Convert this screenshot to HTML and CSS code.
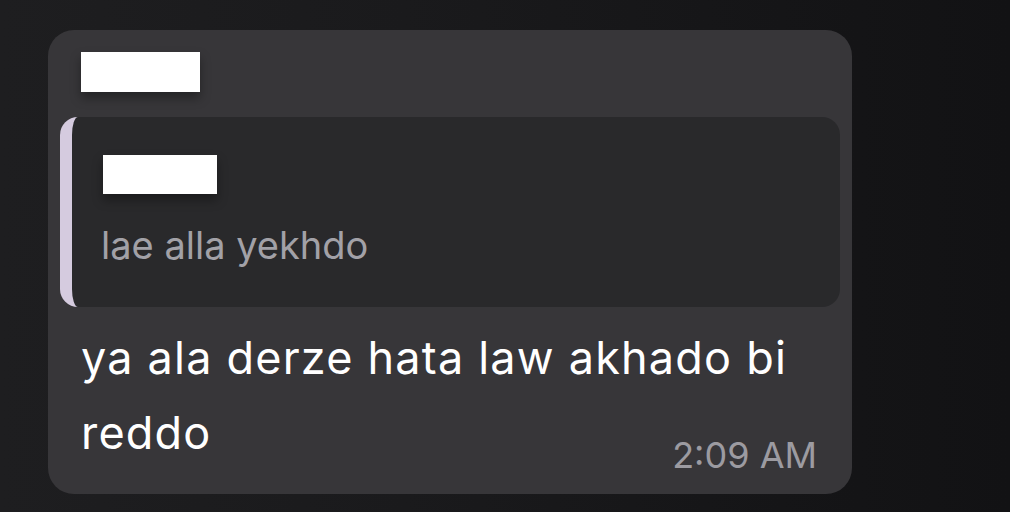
FILE: index.html
```html
<!DOCTYPE html>
<html>
<head>
<meta charset="utf-8">
<link rel="stylesheet" href="styles.css">
</head>
<body>
  <div class="bubble">
    <div class="redact redact-name"></div>
    <div class="quote">
      <div class="redact redact-quote"></div>
      <div class="quote-text">lae alla yekhdo</div>
    </div>
    <div class="message">ya ala derze hata law akhado bi reddo<span class="time">2:09 AM</span></div>
  </div>
</body>
</html>
```
FILE: styles.css
```css
html, body {
  margin: 0;
  padding: 0;
}
body {
  width: 1010px;
  height: 512px;
  overflow: hidden;
  background: linear-gradient(90deg, #1e1e20 0%, #1a1a1c 40%, #141416 85%, #121214 100%);
  font-family: Inter, "Noto Sans", sans-serif;
  padding-top: 30px;
  box-sizing: border-box;
}
.bubble {
  margin-left: 48px;
  width: 804px;
  height: 464px;
  box-sizing: border-box;
  background: #373639;
  border-radius: 26px;
  padding: 22px 12px 18px 12px;
}
.redact {
  background: #ffffff;
  box-shadow: 0 6px 10px rgba(0, 0, 0, 0.35);
}
.redact-name {
  margin-left: 21px;
  width: 119px;
  height: 40px;
}
.quote {
  margin-top: 25px;
  height: 190px;
  box-sizing: border-box;
  background: #29292b;
  border-left: 12px solid #d5cbdf;
  border-radius: 18px;
  padding: 38px 0 0 29px;
}
.redact-quote {
  margin-left: 2px;
  width: 114px;
  height: 39px;
}
.quote-text {
  margin-top: 28px;
  font-size: 38px;
  line-height: 46px;
  color: #a2a1a7;
}
.message {
  display: flow-root;
  margin-top: 13px;
  padding-left: 21px;
  padding-right: 20px;
  font-size: 45px;
  line-height: 75px;
  letter-spacing: 1.2px;
  color: #ffffff;
}
.time {
  float: right;
  margin-top: 40px;
  margin-right: 3px;
  font-size: 36px;
  line-height: 40px;
  letter-spacing: 0;
  color: #9c9ba1;
}
```
